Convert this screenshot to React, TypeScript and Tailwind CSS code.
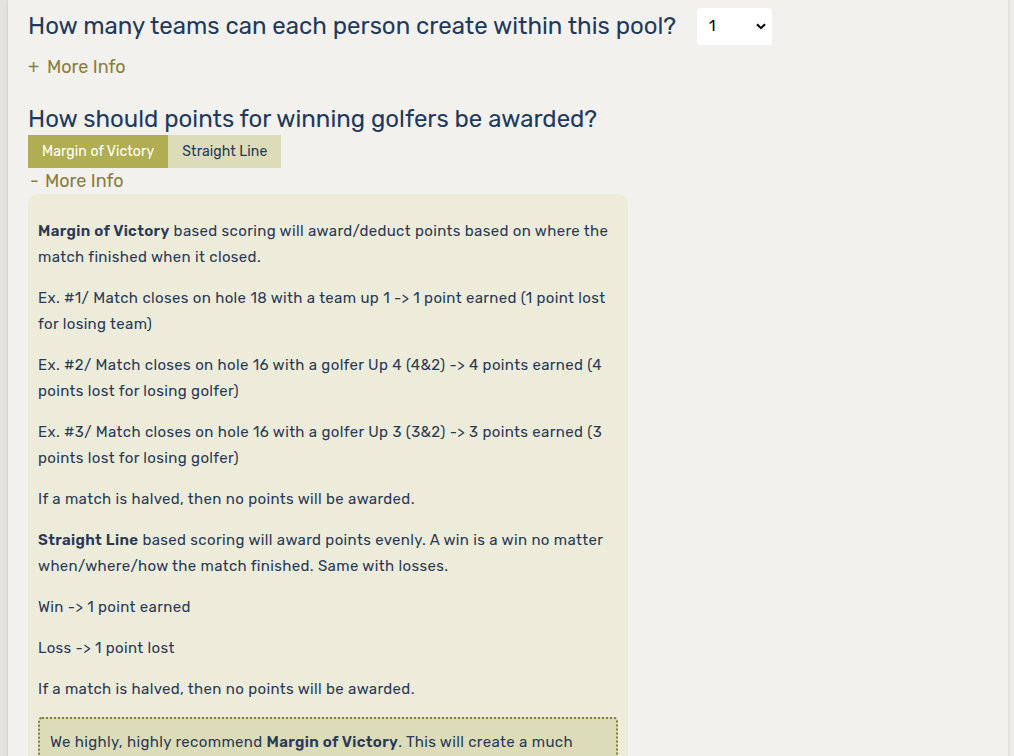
import React from 'react';

const Para: React.FC<{ children: React.ReactNode; first?: boolean }> = ({ children, first }) => (
  <p className={`${first ? 'mt-[14px]' : 'mt-[15px]'} text-[15px] leading-[26px] tracking-[0.35px] text-[#2a3a56]`}>{children}</p>
);

const App: React.FC = () => {
  return (
    <div className="min-h-screen bg-gradient-to-r from-[#e3e2de] to-[#eeede9] font-['Rubik','Roboto',sans-serif]">
      <div className="ml-[8px] mr-[6px] min-h-screen bg-[#f2f1ed] pl-[20px] pt-[8px] shadow-[0_0_3px_rgba(0,0,0,0.15)]">
        {/* teams per person */}
        <div className="flex items-center">
          <h2 className="text-[24px] leading-[29px] text-[#1f3a5c]">
            How many teams can each person create within this pool?
          </h2>
          <div className="relative ml-[21px]">
            <select className="h-[37px] w-[75px] appearance-none rounded-[4px] bg-white pl-[12px] text-[15px] text-black outline-none">
              <option>1</option>
              <option>2</option>
              <option>3</option>
            </select>
            <svg className="pointer-events-none absolute right-[6px] top-[15px]" width="10" height="7" viewBox="0 0 10 7">
              <path d="M1 1.2 L5 5.2 L9 1.2" fill="none" stroke="#000" strokeWidth="2" />
            </svg>
          </div>
        </div>
        <div className="mt-[9px] text-[18px] leading-[27px] text-[#8a7d3c]">
          <span className="inline-block w-[19px]">+</span>More Info
        </div>

        {/* points awarded */}
        <h2 className="mt-[23px] text-[24px] leading-[31px] text-[#1f3a5c]">
          How should points for winning golfers be awarded?
        </h2>
        <div className="flex">
          <button className="h-[33px] bg-[#b0ad52] px-[14px] text-[14px] tracking-[0.1px] text-white">Margin of Victory</button>
          <button className="h-[33px] bg-[#dcdcb9] px-[14px] text-[14px] tracking-[0.1px] text-[#1f3a5c]">Straight Line</button>
        </div>
        <div className="text-[18px] leading-[26px] text-[#8a7d3c]">
          <span className="inline-block w-[17px] pl-[2px]">-</span>More Info
        </div>

        <div className="w-[600px] rounded-[10px] bg-[#edecdb] px-[10px] pt-[10px] pb-[20px]">
          <Para first>
            <b className="font-semibold">Margin of Victory</b> based scoring will award/deduct points based on where the match finished when it closed.
          </Para>
          <Para>Ex. #1/ Match closes on hole 18 with a team up 1 -&gt; 1 point earned (1 point lost for losing team)</Para>
          <Para>Ex. #2/ Match closes on hole 16 with a golfer Up 4 (4&amp;2) -&gt; 4 points earned (4 points lost for losing golfer)</Para>
          <Para>Ex. #3/ Match closes on hole 16 with a golfer Up 3 (3&amp;2) -&gt; 3 points earned (3 points lost for losing golfer)</Para>
          <Para>If a match is halved, then no points will be awarded.</Para>
          <Para>
            <b className="font-semibold">Straight Line</b> based scoring will award points evenly. A win is a win no matter when/where/how the match finished. Same with losses.
          </Para>
          <Para>Win -&gt; 1 point earned</Para>
          <Para>Loss -&gt; 1 point lost</Para>
          <Para>If a match is halved, then no points will be awarded.</Para>
          <div className="mt-[15px] rounded-[4px] border-2 border-dotted border-[#857f3e] bg-[#dddcb8] p-[10px]">
            <p className="text-[15px] leading-[26px] tracking-[0.35px] text-[#2a3a56]">
              We highly, highly recommend <b className="font-semibold">Margin of Victory</b>. This will create a much more competitive pool where every hole of every match matters.
            </p>
          </div>
        </div>
      </div>
    </div>
  );
};

export default App;
